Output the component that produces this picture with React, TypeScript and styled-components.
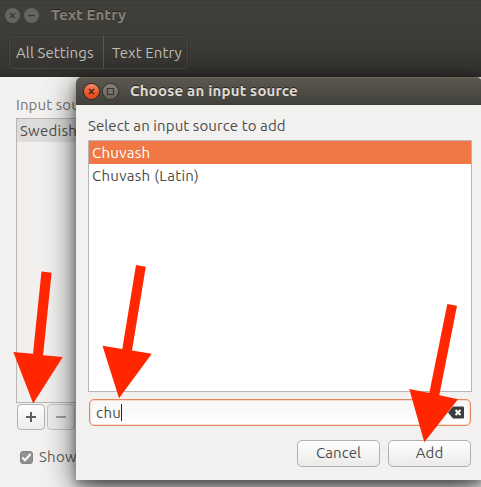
import React from 'react';
import styled, { createGlobalStyle, css } from 'styled-components';

const GlobalStyle = createGlobalStyle`
  * { box-sizing: border-box; }
  body { margin: 0; overflow: hidden; background: #f2f1f0; }
`;

const Screen = styled.div`
  position: relative;
  width: 481px;
  height: 487px;
  overflow: hidden;
  background: #f2f1f0;
  color: #4c4c4c;
  font-family: Ubuntu, "Noto Sans", sans-serif;
  font-size: 15px;
  line-height: 20px;
  white-space: nowrap;
`;

const Label = styled.span<{ $track?: number }>`
  letter-spacing: ${p => p.$track ?? 0.1}px;
`;

const Header = styled.header`
  height: 77px;
  background: linear-gradient(#3b3a36 0, #3b3a36 1px, #464540 1px, #403f3a 2px, #3c3b37 45px, #353430 68px, #2e2d29 77px);
`;

const TitleRow = styled.div`
  display: flex;
  align-items: center;
  height: 30px;
  padding-left: 5px;
  gap: 4px;
`;

const Title = styled.h1<{ $active?: boolean }>`
  margin: 0 0 0 8px;
  font-size: 15px;
  line-height: 20px;
  font-weight: 700;
  color: ${p => (p.$active ? '#dfdbd2' : '#858279')};
  text-shadow: 0 -1px 0 #24231f;
`;

const WindowButton = styled.span<{ $tone: 'dim' | 'close' | 'grey' }>`
  display: grid;
  place-items: center;
  width: 15px;
  height: 15px;
  border-radius: 50%;
  ${p => p.$tone === 'dim' && css`background: #66645e; color: #393834;`}
  ${p => p.$tone === 'close' && css`
    background: linear-gradient(#f4876a, #e9562b 60%, #df4b1e);
    box-shadow: 0 0 0 1px #3a2922;
    color: #47291d;
  `}
  ${p => p.$tone === 'grey' && css`
    background: linear-gradient(#858379, #66645d);
    box-shadow: 0 0 0 1px #383732;
    color: #383732;
  `}
`;

const Breadcrumb = styled.nav`
  display: flex;
  width: 181px;
  height: 35px;
  margin: 5px 0 0 8px;
  border: 1px solid #34332f;
  border-radius: 5px;
  box-shadow: inset 0 0 0 1px #474640;
  color: #c0bdb4;
`;

const Crumb = styled.span`
  display: flex;
  align-items: center;
  padding-left: 7px;
  width: 94px;
  & + & {
    width: 85px;
    padding-left: 8px;
    border-left: 1px solid #5a5852;
  }
`;

const Settings = styled.main`
  display: flex;
  flex-direction: column;
  padding: 18px 0 0 16px;
`;

const Caption = styled.div`
  color: #757371;
  height: 23px;
`;

const SourceList = styled.div`
  width: 300px;
  height: 285px;
  border: 1px solid #b8b5b2;
  background: #f1f0ef;
`;

const SourceRow = styled.div`
  height: 23px;
  padding: 2px 0 0 3px;
  background: #dddcdb;
`;

const ToolButtons = styled.div`
  display: flex;
  gap: 2px;
  padding: 1px 0 0 1px;
`;

const ToolButton = styled.button<{ $off?: boolean }>`
  display: grid;
  place-items: center;
  width: 28px;
  height: 26px;
  padding: 0;
  border: 1px solid ${p => (p.$off ? '#c6c4c2' : '#b5b3b1')};
  border-radius: 4px;
  background: ${p => (p.$off ? '#eeedec' : 'linear-gradient(#fdfdfd, #ededec)')};
  color: ${p => (p.$off ? '#a09f9d' : '#5f5e5d')};
`;

const CheckRow = styled.div`
  display: flex;
  align-items: center;
  gap: 6px;
  margin: 17px 0 0 4px;
  color: #605f5d;
`;

const CheckBox = styled.span`
  display: grid;
  place-items: center;
  width: 13px;
  height: 13px;
  border: 1px solid #858381;
  border-radius: 3px;
  background: #939190;
`;

const Dialog = styled.section`
  position: absolute;
  left: 76px;
  top: 77px;
  width: 406px;
  height: 403px;
  border-radius: 6px 6px 0 0;
  background: #f2f1f0;
  box-shadow: 0 8px 30px rgba(0, 0, 0, 0.7), 0 4px 10px rgba(0, 0, 0, 0.3);
`;

const DialogBar = styled.div`
  display: flex;
  align-items: center;
  height: 28px;
  padding-left: 8px;
  gap: 4px;
  border-radius: 6px 6px 0 0;
  background: linear-gradient(#5c5950, #403f3a);
  box-shadow: inset 0 1px 0 #6a675d;
`;

const DialogBody = styled.div`
  display: flex;
  flex-direction: column;
  width: 396px;
  padding: 11px 0 0 12px;
`;

const ResultList = styled.div`
  height: 252px;
  margin-top: 4px;
  border: 1px solid #b8b5b2;
  background: #fff;
`;

const ResultRow = styled.div<{ $selected?: boolean }>`
  height: 23px;
  padding: 2px 0 0 3px;
  color: ${p => (p.$selected ? '#fff' : '#4c4c4c')};
  background: ${p => (p.$selected ? '#f07746' : 'transparent')};
`;

const SearchField = styled.div`
  display: flex;
  align-items: center;
  height: 27px;
  margin: 7px 1px 0;
  padding: 0 6px;
  border: 1px solid #e4885f;
  border-radius: 5px;
  background: linear-gradient(#f7f6f6, #fff);
  box-shadow: inset 0 0 0 1px #f8ded1;
`;

const Caret = styled.span`
  width: 1px;
  height: 17px;
  background: #222;
  margin-right: auto;
`;

const Actions = styled.div`
  display: flex;
  justify-content: flex-end;
  gap: 8px;
  margin: 14px 1px 0;
`;

const ActionButton = styled.button`
  width: 83px;
  height: 27px;
  padding: 0 0 1px;
  border: 1px solid #b3b1af;
  border-radius: 5px;
  background: linear-gradient(#fff, #ebeae9);
  color: #4c4c4c;
  font: inherit;
`;

const Annotations = styled.svg`
  position: absolute;
  inset: 0;
  pointer-events: none;
`;

const arrows = [
  '41.5,271.5 51.6,272.7 43.1,355.2 62.8,357 33.2,403.5 13.3,352 33,353.7',
  '136,265 145.8,266.7 132,350.4 151.8,353.8 119,398.3 102.5,345.7 122.3,348.9',
  '447.3,304 457,305.8 439.3,395.2 458,399.2 424.3,442.3 409.3,389 429.3,392.9',
];

const Glyph = ({ d, size = 9, weight = 1.2 }: { d: string; size?: number; weight?: number }) => (
  <svg width={size} height={size} viewBox="0 0 9 9" fill="none" stroke="currentColor" strokeWidth={weight}>
    <path d={d} />
  </svg>
);

export default function App() {
  return (
    <Screen>
      <GlobalStyle />
      <Header>
        <TitleRow>
          <WindowButton $tone="dim"><Glyph d="M2 2l5 5M7 2L2 7" /></WindowButton>
          <WindowButton $tone="dim"><Glyph d="M1 4.5h7" /></WindowButton>
          <Title><Label $track={0.15}>Text Entry</Label></Title>
        </TitleRow>
        <Breadcrumb>
          <Crumb><Label>All Settings</Label></Crumb>
          <Crumb><Label>Text Entry</Label></Crumb>
        </Breadcrumb>
      </Header>

      <Settings>
        <Caption><Label>Input sources to use:</Label></Caption>
        <SourceList>
          <SourceRow><Label $track={0.25}>Swedish</Label></SourceRow>
        </SourceList>
        <ToolButtons>
          <ToolButton aria-label="Add source"><Glyph size={10} weight={1.8} d="M0 4.5h9M4.5 0v9" /></ToolButton>
          <ToolButton $off aria-label="Remove source"><Glyph size={10} weight={1.8} d="M0 4.5h9" /></ToolButton>
        </ToolButtons>
        <CheckRow>
          <CheckBox>
            <svg width="11" height="11" viewBox="0 0 11 11" fill="none" stroke="#fff" strokeWidth="2">
              <path d="M1.5 5.5L4 8.3 9.5 2" />
            </svg>
          </CheckBox>
          <Label $track={0.25}>Show</Label>
        </CheckRow>
      </Settings>

      <Dialog>
        <DialogBar>
          <WindowButton $tone="close"><Glyph d="M2 2l5 5M7 2L2 7" weight={1.5} /></WindowButton>
          <WindowButton $tone="grey"><Glyph d="M1.5 1.5h6v6h-6z" /></WindowButton>
          <Title $active><Label $track={0.2}>Choose an input source</Label></Title>
        </DialogBar>
        <DialogBody>
          <Label>Select an input source to add</Label>
          <ResultList>
            <ResultRow $selected><Label $track={0.3}>Chuvash</Label></ResultRow>
            <ResultRow><Label $track={0.3}>Chuvash (Latin)</Label></ResultRow>
          </ResultList>
          <SearchField>
            <Label $track={0.4}>chu</Label>
            <Caret />
            <svg width="16" height="13" viewBox="0 0 16 13">
              <path d="M0 6.5L5 .5h10q1 0 1 1v10q0 1-1 1H5z" fill="#3c3c3c" />
              <path d="M7.5 4l5 5m0-5l-5 5" stroke="#fff" strokeWidth="2" />
            </svg>
          </SearchField>
          <Actions>
            <ActionButton><Label>Cancel</Label></ActionButton>
            <ActionButton><Label>Add</Label></ActionButton>
          </Actions>
        </DialogBody>
      </Dialog>

      <Annotations width="481" height="487" viewBox="0 0 481 487" fill="#ff2600">
        {arrows.map(points => <polygon key={points} points={points} />)}
      </Annotations>
    </Screen>
  );
}
